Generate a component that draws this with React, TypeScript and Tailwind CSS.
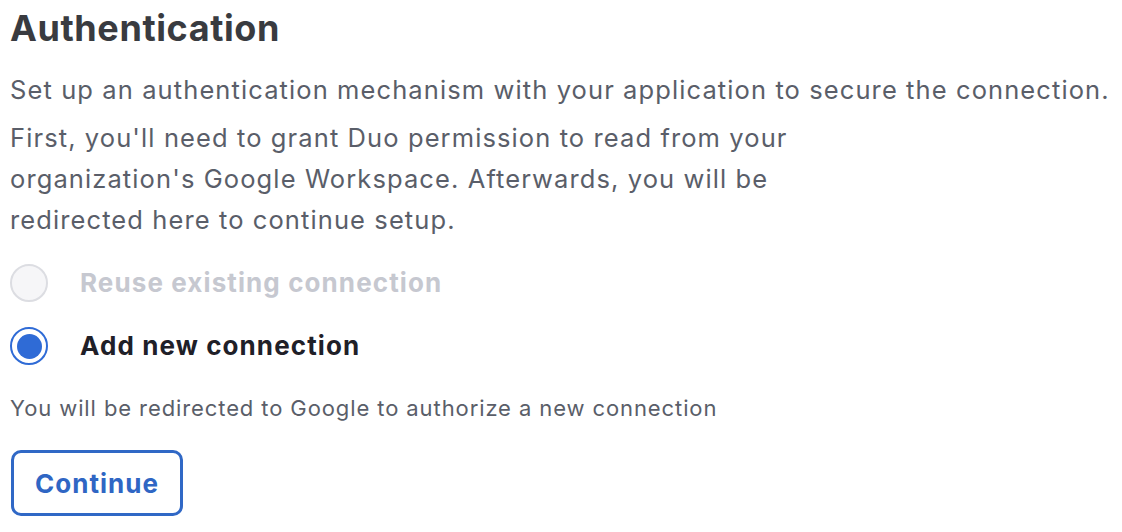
import React from 'react';

export default function App() {
  const options = [
    { key: 'reuse', label: 'Reuse existing connection', disabled: true, checked: false },
    { key: 'new', label: 'Add new connection', disabled: false, checked: true },
  ];

  return (
    <div className="min-h-screen bg-white font-['Inter',sans-serif] pl-[10px] pt-[6px]">
      <h2 className="text-[36px] font-bold text-[#393b40] leading-[44px] tracking-[0.6px]">Authentication</h2>

      <p className="mt-[22px] text-[25.5px] leading-[36px] tracking-[1.1px] text-[#5a5e69]">
        Set up an authentication mechanism with your application to secure the connection.
      </p>
      <p className="mt-[9px] max-w-[800px] text-[25.5px] leading-[41px] tracking-[1.1px] text-[#5a5e69]">
        First, you'll need to grant Duo permission to read from your organization's Google Workspace. Afterwards, you will be redirected here to continue setup.
      </p>

      {/* Options de connexion */}
      <div className="mt-[24px] flex flex-col gap-[25px]">
        {options.map((opt) => (
          <label key={opt.key} className="flex items-center gap-[32px]">
            <span
              className={`flex items-center justify-center w-[38px] h-[38px] rounded-full border-2 ${
                opt.checked ? 'border-[#2f6bd6] bg-white' : 'border-[#dcdde2] bg-[#f6f6f8]'
              }`}
            >
              {opt.checked && <span className="w-[25px] h-[25px] rounded-full bg-[#2f6bd6]" />}
            </span>
            <span
              className={`text-[26px] font-bold leading-[38px] tracking-[1.1px] ${
                opt.disabled ? 'text-[#c6c8d0]' : 'text-[#1f2028]'
              }`}
            >
              {opt.label}
            </span>
          </label>
        ))}
      </div>

      <p className="mt-[28px] text-[22px] leading-[30px] tracking-[0.9px] text-[#5a5e69]">
        You will be redirected to Google to authorize a new connection
      </p>

      <button className="mt-[27px] ml-[1px] w-[172px] h-[66px] rounded-[10px] border-[3px] border-[#3068c6] bg-white text-[26px] font-bold tracking-[1px] text-[#2f66c4]">
        Continue
      </button>
    </div>
  );
}
